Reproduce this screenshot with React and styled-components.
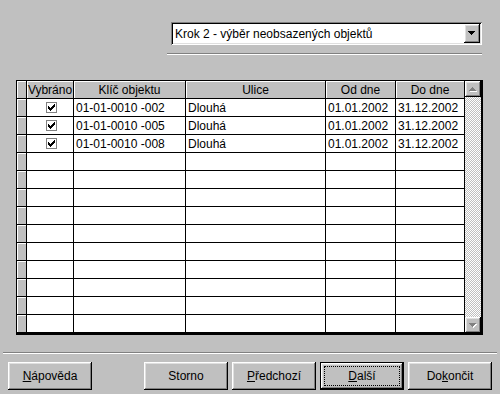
import React from "react";
import styled, { createGlobalStyle } from "styled-components";

const GlobalStyle = createGlobalStyle`
  html, body {
    margin: 0;
    padding: 0;
    background: #c0c0c0;
  }
  body {
    font-family: "Liberation Sans", Arial, sans-serif;
    font-size: 12px;
    color: #000;
  }
`;

const raised = `
  box-shadow: inset -1px -1px #000, inset 1px 1px #fff,
    inset -2px -2px #808080, inset 2px 2px #dfdfdf;
`;

// widths include the 1px grid line on the right
const columns = [
  { key: "sel", title: "Vybráno", width: 47, align: "center" },
  { key: "id", title: "Klíč objektu", width: 112 },
  { key: "street", title: "Ulice", width: 140 },
  { key: "from", title: "Od dne", width: 70 },
  { key: "to", title: "Do dne", width: 69 },
];

const rows = [
  { sel: true, id: "01-01-0010 -002", street: "Dlouhá", from: "01.01.2002", to: "31.12.2002" },
  { sel: true, id: "01-01-0010 -005", street: "Dlouhá", from: "01.01.2002", to: "31.12.2002" },
  { sel: true, id: "01-01-0010 -008", street: "Dlouhá", from: "01.01.2002", to: "31.12.2002" },
];
const ROW_COUNT = 13;

const Window = styled.div`
  width: 500px;
  height: 394px;
  background: #c0c0c0;
  display: flex;
  flex-direction: column;
  overflow: hidden;
`;

const ComboBox = styled.div`
  margin: 22px 0 0 171px;
  width: 311px;
  height: 23px;
  background: #fff;
  box-shadow: inset 1px 1px #808080, inset -1px -1px #fff,
    inset 2px 2px #000, inset -2px -2px #dfdfdf;
  display: flex;
  align-items: center;
  padding: 2px;
  box-sizing: border-box;
`;

const ComboText = styled.span`
  flex: 1;
  padding-left: 2px;
  white-space: nowrap;
`;

const DropButton = styled.div`
  width: 16px;
  height: 19px;
  background: #c0c0c0;
  ${raised}
  display: flex;
  align-items: center;
  justify-content: center;
`;

const Separator = styled.div`
  margin: ${(p) => p.$top}px 0 0 ${(p) => p.$left}px;
  width: ${(p) => p.$width}px;
  border-top: 1px solid #808080;
  border-bottom: 1px solid #fff;
`;

const GridFrame = styled.div`
  margin: 25px 0 0 16px;
  width: 467px;
  box-sizing: border-box;
  border: 1px solid #000;
  border-right-width: 2px;
  border-bottom-width: 2px;
  display: flex;
  background: #fff;
`;

const Table = styled.div`
  display: grid;
  grid-template-columns: 10px ${columns.map((c) => `${c.width}px`).join(" ")};
  grid-auto-rows: 18px;
`;

const Cell = styled.div`
  box-sizing: border-box;
  border-right: 1px solid #000;
  border-bottom: 1px solid #000;
  padding: 0 0 0 2px;
  white-space: nowrap;
  overflow: hidden;
  display: flex;
  align-items: center;
  justify-content: ${(p) => (p.$align === "center" ? "center" : "flex-start")};
`;

const HeadCell = styled(Cell)`
  background: #c0c0c0;
  box-shadow: inset 1px 1px #fff;
  justify-content: center;
  padding: 0;
`;

const RowHead = styled.div`
  box-sizing: border-box;
  border-right: 1px solid #000;
  border-bottom: 1px solid #000;
  background: #c0c0c0;
  box-shadow: inset 1px 1px #fff;
`;

const CheckBox = styled.div`
  width: 11px;
  height: 11px;
  box-sizing: border-box;
  border: 1px solid #808080;
  background: #fff;
  display: flex;
  align-items: center;
  justify-content: center;
`;

const ScrollBar = styled.div`
  width: 16px;
  display: flex;
  flex-direction: column;
`;

const ScrollButton = styled.div`
  width: 16px;
  height: 16px;
  background: #c0c0c0;
  ${raised}
  display: flex;
  align-items: center;
  justify-content: center;
`;

const Track = styled.div`
  flex: 1;
  background: repeating-conic-gradient(#c0c0c0 0 25%, #fff 0 50%) 0 0 / 2px 2px;
`;

const ButtonRow = styled.div`
  display: flex;
  gap: 4px;
  margin: 8px 0 0 8px;
`;

const Button = styled.div`
  width: 84px;
  height: 28px;
  box-sizing: border-box;
  background: #c0c0c0;
  ${raised}
  display: flex;
  align-items: center;
  justify-content: center;
  margin-left: ${(p) => p.$push || 0}px;
  position: relative;
  ${(p) => p.$default && `border: 1px solid #000;`}
`;

const FocusRing = styled.span`
  position: absolute;
  inset: 3px;
  border: 1px dotted #000;
  pointer-events: none;
`;

const Key = styled.span`
  text-decoration: underline;
`;

const Check = () => (
  <svg width="7" height="7" viewBox="0 0 7 7" shapeRendering="crispEdges">
    <path
      fill="#000"
      d="M6 0h1v1h-1z M5 1h2v1h-2z M0 2h1v1h-1z M4 2h3v1h-3z M0 3h2v1h-2z M3 3h3v1h-3z M0 4h5v1h-5z M1 5h3v1h-3z M2 6h1v1h-1z"
    />
  </svg>
);

const Arrow = ({ dir = "down", disabled }) => {
  const d =
    dir === "down"
      ? "M0 0h7v1h-7z M1 1h5v1h-5z M2 2h3v1h-3z M3 3h1v1h-1z"
      : "M3 0h1v1h-1z M2 1h3v1h-3z M1 2h5v1h-5z M0 3h7v1h-7z";
  return (
    <svg width="8" height="5" viewBox="0 0 8 5" shapeRendering="crispEdges">
      {disabled && <path fill="#fff" d={d} transform="translate(1 1)" />}
      <path fill={disabled ? "#808080" : "#000"} d={d} />
    </svg>
  );
};

export default function App() {
  const body = [];
  for (let i = 0; i < ROW_COUNT; i++) {
    const r = rows[i];
    body.push(<RowHead key={`h${i}`} />);
    columns.forEach((c) => {
      let content = null;
      if (r) {
        content =
          c.key === "sel" ? (
            r.sel ? (
              <CheckBox>
                <Check />
              </CheckBox>
            ) : null
          ) : (
            r[c.key]
          );
      }
      body.push(
        <Cell key={`${i}-${c.key}`} $align={c.align}>
          {content}
        </Cell>
      );
    });
  }

  return (
    <Window>
      <GlobalStyle />
      <ComboBox>
        <ComboText>Krok 2 - výběr neobsazených objektů</ComboText>
        <DropButton>
          <Arrow dir="down" />
        </DropButton>
      </ComboBox>
      <Separator $top={8} $left={167} $width={315} />
      <GridFrame>
        <Table>
          <RowHead />
          {columns.map((c) => (
            <HeadCell key={c.key}>{c.title}</HeadCell>
          ))}
          {body}
        </Table>
        <ScrollBar>
          <ScrollButton>
            <Arrow dir="up" disabled />
          </ScrollButton>
          <Track />
          <ScrollButton>
            <Arrow dir="down" disabled />
          </ScrollButton>
        </ScrollBar>
      </GridFrame>
      <Separator $top={17} $left={3} $width={494} />
      <ButtonRow>
        <Button>
          <span>
            <Key>N</Key>ápověda
          </span>
        </Button>
        <Button $push={48}>Storno</Button>
        <Button>
          <span>
            <Key>P</Key>ředchozí
          </span>
        </Button>
        <Button $default>
          <span>
            <Key>D</Key>alší
          </span>
          <FocusRing />
        </Button>
        <Button>
          <span>
            Do<Key>k</Key>ončit
          </span>
        </Button>
      </ButtonRow>
    </Window>
  );
}
